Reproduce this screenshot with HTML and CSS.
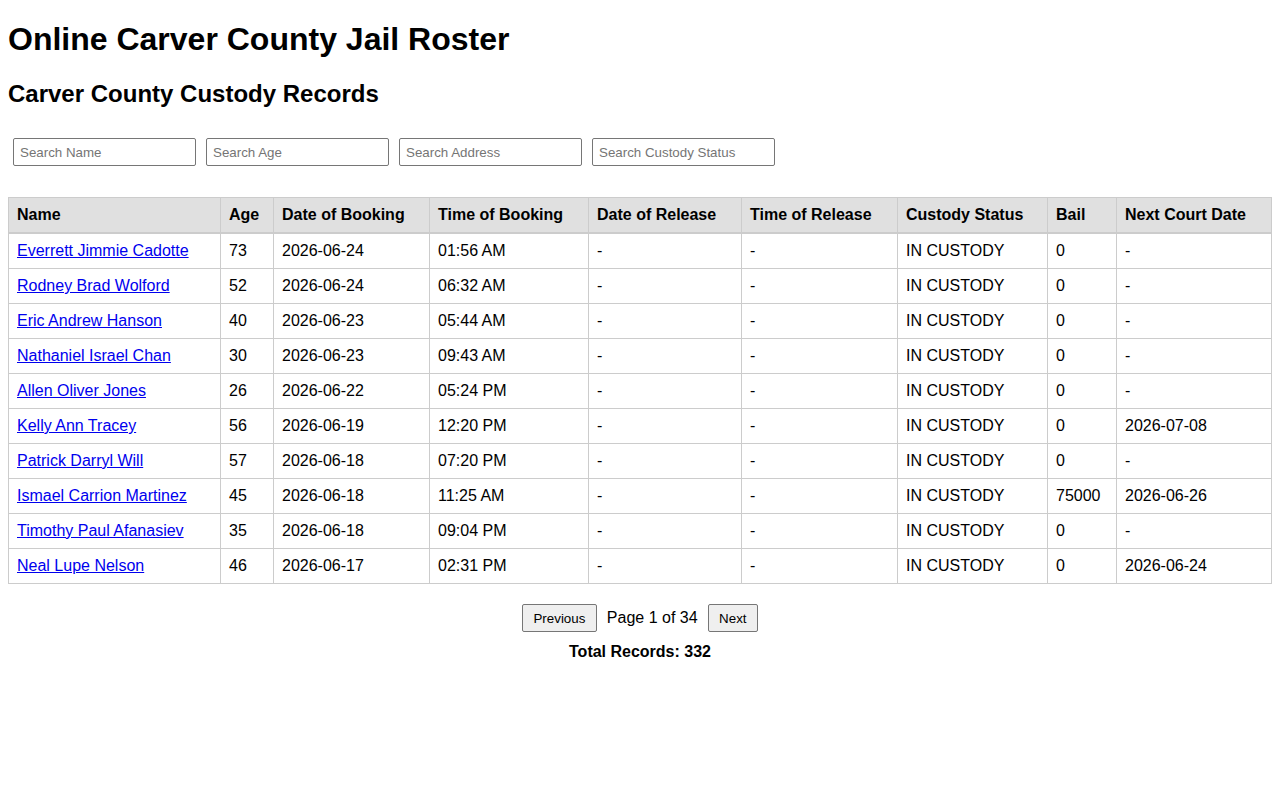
FILE: index.html
```html
<!DOCTYPE html>
<html lang="en">
<head>
<meta charset="utf-8">
<title>Online Carver County Jail Roster</title>
<link rel="stylesheet" href="styles.css">
</head>
<body>
<h1 class="title">Online Carver County Jail Roster</h1>
<h2 class="subtitle">Carver County Custody Records</h2>
<div class="search-bar">
  <input class="search" type="text" placeholder="Search Name">
  <input class="search" type="text" placeholder="Search Age">
  <input class="search" type="text" placeholder="Search Address">
  <input class="search" type="text" placeholder="Search Custody Status">
</div>
<table class="roster">
  <thead>
    <tr>
      <th class="c-name">Name</th>
      <th class="c-age">Age</th>
      <th class="c-dob">Date of Booking</th>
      <th class="c-tob">Time of Booking</th>
      <th class="c-dor">Date of Release</th>
      <th class="c-tor">Time of Release</th>
      <th class="c-status">Custody Status</th>
      <th class="c-bail">Bail</th>
      <th class="c-court">Next Court Date</th>
    </tr>
  </thead>
  <tbody>
    <tr><td><a href="#">Everrett Jimmie Cadotte</a></td><td>73</td><td>2026-06-24</td><td>01:56 AM</td><td>-</td><td>-</td><td>IN CUSTODY</td><td>0</td><td>-</td></tr>
    <tr><td><a href="#">Rodney Brad Wolford</a></td><td>52</td><td>2026-06-24</td><td>06:32 AM</td><td>-</td><td>-</td><td>IN CUSTODY</td><td>0</td><td>-</td></tr>
    <tr><td><a href="#">Eric Andrew Hanson</a></td><td>40</td><td>2026-06-23</td><td>05:44 AM</td><td>-</td><td>-</td><td>IN CUSTODY</td><td>0</td><td>-</td></tr>
    <tr><td><a href="#">Nathaniel Israel Chan</a></td><td>30</td><td>2026-06-23</td><td>09:43 AM</td><td>-</td><td>-</td><td>IN CUSTODY</td><td>0</td><td>-</td></tr>
    <tr><td><a href="#">Allen Oliver Jones</a></td><td>26</td><td>2026-06-22</td><td>05:24 PM</td><td>-</td><td>-</td><td>IN CUSTODY</td><td>0</td><td>-</td></tr>
    <tr><td><a href="#">Kelly Ann Tracey</a></td><td>56</td><td>2026-06-19</td><td>12:20 PM</td><td>-</td><td>-</td><td>IN CUSTODY</td><td>0</td><td>2026-07-08</td></tr>
    <tr><td><a href="#">Patrick Darryl Will</a></td><td>57</td><td>2026-06-18</td><td>07:20 PM</td><td>-</td><td>-</td><td>IN CUSTODY</td><td>0</td><td>-</td></tr>
    <tr><td><a href="#">Ismael Carrion Martinez</a></td><td>45</td><td>2026-06-18</td><td>11:25 AM</td><td>-</td><td>-</td><td>IN CUSTODY</td><td>75000</td><td>2026-06-26</td></tr>
    <tr><td><a href="#">Timothy Paul Afanasiev</a></td><td>35</td><td>2026-06-18</td><td>09:04 PM</td><td>-</td><td>-</td><td>IN CUSTODY</td><td>0</td><td>-</td></tr>
    <tr><td><a href="#">Neal Lupe Nelson</a></td><td>46</td><td>2026-06-17</td><td>02:31 PM</td><td>-</td><td>-</td><td>IN CUSTODY</td><td>0</td><td>2026-06-24</td></tr>
  </tbody>
</table>
<div class="pager">
  <button class="pager-btn" type="button">Previous</button>
  <span class="pager-info">Page 1 of 34</span>
  <button class="pager-btn" type="button">Next</button>
</div>
<p class="total">Total Records: 332</p>
</body>
</html>
```
FILE: styles.css
```css
body {
  margin: 8px;
  font-family: "Liberation Sans", Arial, sans-serif;
  color: #000;
  background: #fff;
}
.title {
  font-size: 32px;
  font-weight: bold;
  margin: 13px 0 22px;
}
.subtitle {
  font-size: 24px;
  font-weight: bold;
  margin: 0 0 30px;
}
.search-bar {
  display: flex;
  gap: 10px;
  padding: 0 5px;
  margin-bottom: 31px;
}
.search {
  box-sizing: border-box;
  width: 183px;
  height: 28px;
  padding: 5px 6px;
  border: 1px solid #767676;
  border-radius: 2px;
  font-family: "Liberation Sans", Arial, sans-serif;
  font-size: 13.33px;
  color: #000;
}
.search::placeholder {
  color: #757575;
}
.roster {
  width: 100%;
  border-collapse: collapse;
  font-size: 16px;
}
.roster th,
.roster td {
  border: 1px solid #ccc;
  padding: 8px;
  text-align: left;
}
.roster th {
  background: #e0e0e0;
  font-weight: bold;
  border-bottom: 2px solid #ccc;
}
.roster a {
  color: #0000ee;
}
.c-name { width: 195px; }
.c-age { width: 36px; }
.c-dob { width: 139px; }
.c-tob { width: 142px; }
.c-dor { width: 136px; }
.c-tor { width: 139px; }
.c-status { width: 133px; }
.c-bail { width: 52px; }
.c-court { width: 138px; }
.pager {
  display: flex;
  justify-content: center;
  align-items: center;
  gap: 10px;
  margin-top: 20px;
}
.pager-btn {
  box-sizing: border-box;
  height: 28px;
  padding: 0 10.5px;
  font-family: "Liberation Sans", Arial, sans-serif;
  font-size: 13.33px;
  color: #000;
  background: #efefef;
  border: 1px solid #767676;
  border-radius: 2px;
}
.pager-info {
  font-size: 16px;
}
.total {
  text-align: center;
  font-weight: bold;
  font-size: 16px;
  margin: 11px 0;
}
```
